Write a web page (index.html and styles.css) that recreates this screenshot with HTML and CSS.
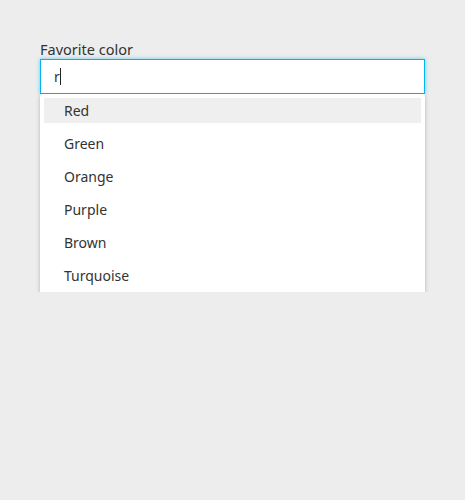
FILE: index.html
```html
<!DOCTYPE html>
<html>
<head>
<meta charset="utf-8">
<link rel="stylesheet" href="styles.css">
</head>
<body>
<div class="field">
  <label class="label">Favorite color</label>
  <div class="input"><span class="value">r</span><span class="caret"></span></div>
  <ul class="menu">
    <li class="item active"><span class="item-inner">Red</span></li>
    <li class="item"><span class="item-inner">Green</span></li>
    <li class="item"><span class="item-inner">Orange</span></li>
    <li class="item"><span class="item-inner">Purple</span></li>
    <li class="item"><span class="item-inner">Brown</span></li>
    <li class="item"><span class="item-inner">Turquoise</span></li>
  </ul>
</div>
</body>
</html>
```
FILE: styles.css
```css
html, body {
  margin: 0;
  padding: 0;
  background: #ededed;
  font-family: "Noto Sans", "Open Sans", sans-serif;
  font-size: 14px;
  color: #333;
}
.field {
  width: 385px;
  padding: 40px 0 0 40px;
}
.label {
  display: block;
  font-size: 14.5px;
  line-height: 19px;
  height: 19px;
  color: #333;
}
.input {
  box-sizing: border-box;
  height: 35px;
  border: 1px solid #00b4f0;
  background: #fff;
  box-shadow: 0 0 4px rgba(0, 180, 240, 0.6);
  display: flex;
  align-items: center;
  padding-left: 13px;
}
.value {
  line-height: 18px;
}
.caret {
  width: 1px;
  height: 17px;
  background: #222;
}
.menu {
  list-style: none;
  margin: 0;
  padding: 0;
  background: #fff;
  box-shadow: 0 2px 4px rgba(0, 0, 0, 0.25);
}
.item {
  padding: 4px;
}
.item-inner {
  display: flex;
  align-items: center;
  height: 25px;
  padding-left: 20px;
}
.item.active .item-inner {
  background: #efefef;
}
```
